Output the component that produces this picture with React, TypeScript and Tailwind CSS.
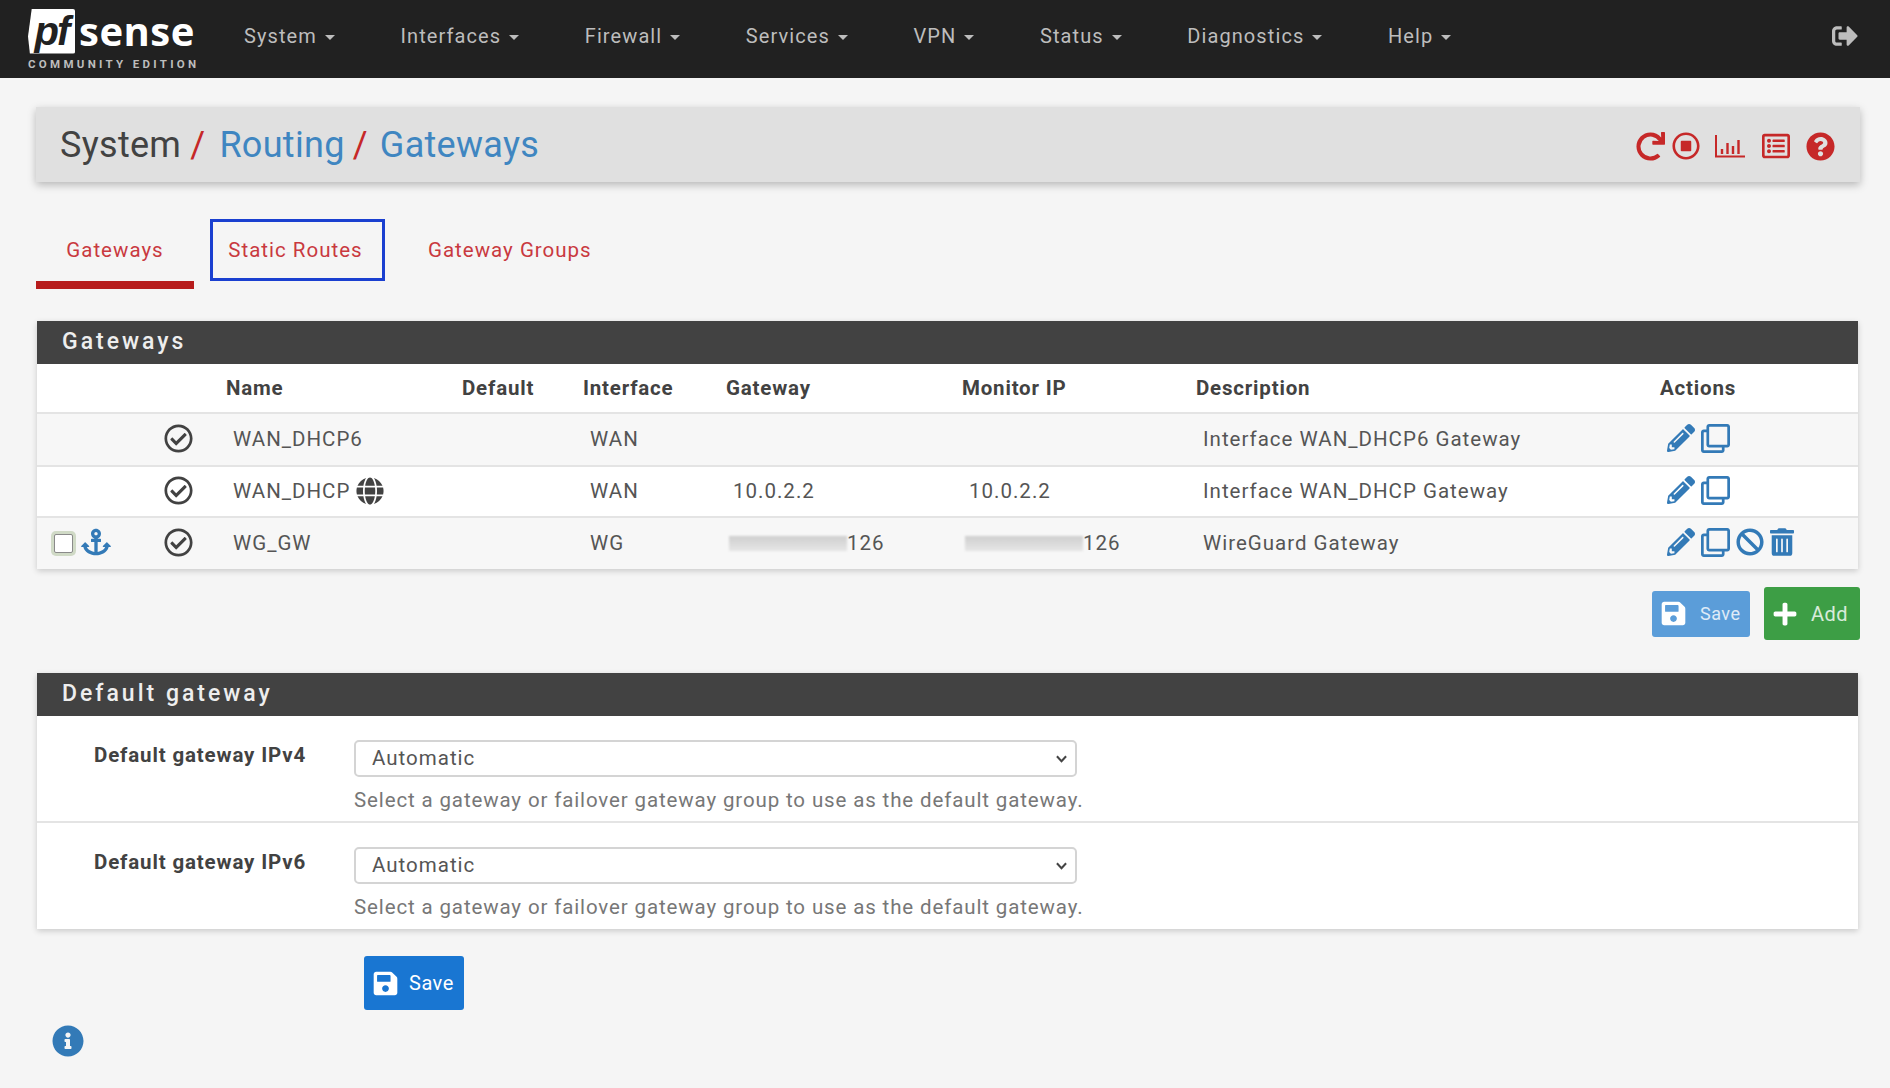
import React from "react";
import {
  FaAnchor, FaBan, FaGlobe, FaInfoCircle, FaPencilAlt, FaPlus, FaQuestionCircle, FaRedo,
  FaRegCheckCircle, FaRegClone, FaRegListAlt, FaRegStopCircle, FaSave, FaSignOutAlt, FaTrashAlt,
} from "react-icons/fa";

const navItems = ["System", "Interfaces", "Firewall", "Services", "VPN", "Status", "Diagnostics", "Help"];

function Logo() {
  return (
    <div className="flex flex-col w-[170px] shrink-0 ml-[28px]">
      <div className="flex items-center h-[46px] mt-[8px]">
        <div className="w-[47px] h-[45px] bg-white rounded-[2px] flex items-center justify-center overflow-hidden [clip-path:polygon(8%_0,100%_0,100%_100%,4%_100%,0_62%)]">
          <span className="text-[#212121] italic font-bold text-[40px] leading-none tracking-[-2px] font-['Liberation_Sans',sans-serif]">pf</span>
        </div>
        <span className="text-white font-bold text-[40px] leading-none ml-[4px] font-['Open_Sans',sans-serif] tracking-[0.5px]">sense</span>
      </div>
      <span className="text-[#bdbdbd] font-bold text-[11.5px] leading-none tracking-[3.3px] mt-[5px] whitespace-nowrap">COMMUNITY EDITION</span>
    </div>
  );
}

function ChartIcon() {
  return (
    <svg viewBox="0 0 30 24" className="w-[30px] h-[24px] ml-[15px]" fill="none" stroke="currentColor">
      <path d="M1 1 V22.5 H30" strokeWidth="2" />
      <path d="M7 20 V15 M12.5 20 V9 M18 20 V12 M23.5 20 V6" strokeWidth="2.4" />
    </svg>
  );
}

function Redacted({ text }: { text: string }) {
  return (
    <span className="inline-flex items-center -ml-[4px]">
      <span className="inline-block w-[118px] h-[15px] bg-gradient-to-b from-[#cfcfcf] to-[#e6e6e6] blur-[1px]" />
      <span>{text}</span>
    </span>
  );
}

const headers = ["Name", "Default", "Interface", "Gateway", "Monitor IP", "Description", "Actions"];

function Actions({ extra }: { extra?: boolean }) {
  return (
    <div className="flex items-center text-[#337ab7] pl-[8px] -mt-[3px]">
      <FaPencilAlt className="w-[28px] h-[28px]" />
      <FaRegClone className="w-[29px] h-[29px] ml-[6px]" />
      {extra && <FaBan className="w-[28px] h-[28px] ml-[6px]" />}
      {extra && <FaTrashAlt className="w-[24px] h-[28px] ml-[6px]" />}
    </div>
  );
}

function Check() {
  return <FaRegCheckCircle className="w-[29px] h-[29px] ml-[9px] -mt-[3px] text-[#424242]" />;
}

function Gateways() {
  const td = "pl-[8px] align-middle";
  return (
    <section className="bg-white shadow-[0_2px_6px_rgba(0,0,0,0.18)] ml-[1px] mr-[2px]">
      <h2 className="h-[43px] bg-[#424242] text-[#eeeeee] text-[23px] font-medium tracking-[3px] pl-[25px] flex items-center">Gateways</h2>
      <table className="w-full table-fixed border-collapse text-[20.5px] tracking-[1px] text-[#555555]">
        <colgroup>
          <col className="w-[118px]" />
          <col className="w-[70px]" />
          <col className="w-[236px]" />
          <col className="w-[121px]" />
          <col className="w-[143px]" />
          <col className="w-[236px]" />
          <col className="w-[234px]" />
          <col className="w-[464px]" />
          <col />
        </colgroup>
        <thead>
          <tr className="h-[49px] border-b-2 border-[#e4e4e4]">
            <th />
            <th />
            {headers.map((h) => (
              <th key={h} className="text-left pl-[1px] font-bold text-[#424242] tracking-[0.8px] pt-[1px]">{h}</th>
            ))}
          </tr>
        </thead>
        <tbody>
          <tr className="h-[53px] bg-[#f7f7f7] border-b-2 border-[#e4e4e4]">
            <td />
            <td><Check /></td>
            <td className={td}>WAN_DHCP6</td>
            <td />
            <td className={td}>WAN</td>
            <td />
            <td />
            <td className={td}>Interface WAN_DHCP6 Gateway</td>
            <td><Actions /></td>
          </tr>
          <tr className="h-[51px] bg-white border-b-2 border-[#e4e4e4]">
            <td />
            <td><Check /></td>
            <td className={td}>
              <span className="inline-flex items-center">WAN_DHCP<FaGlobe className="w-[28px] h-[28px] ml-[6px] -mt-[2px] text-[#424242]" /></span>
            </td>
            <td />
            <td className={td}>WAN</td>
            <td className={td}>10.0.2.2</td>
            <td className={td}>10.0.2.2</td>
            <td className={td}>Interface WAN_DHCP Gateway</td>
            <td><Actions /></td>
          </tr>
          <tr className="h-[52px] bg-[#f7f7f7]">
            <td>
              <div className="flex items-center pl-[17px]">
                <span className="w-[19px] h-[19px] bg-white border border-[#8a8a8a] rounded-[2px] shadow-[0_0_0_3px_rgba(170,190,150,0.5)]" />
                <FaAnchor className="w-[30px] h-[30px] ml-[8px] -mt-[3px] text-[#337ab7]" />
              </div>
            </td>
            <td><Check /></td>
            <td className={td}>WG_GW</td>
            <td />
            <td className={td}>WG</td>
            <td className={td}><Redacted text="126" /></td>
            <td className={td}><Redacted text="126" /></td>
            <td className={td}>WireGuard Gateway</td>
            <td><Actions extra /></td>
          </tr>
        </tbody>
      </table>
    </section>
  );
}

function GatewayField({ label, divided }: { label: string; divided?: boolean }) {
  return (
    <div className={divided ? "flex h-[107px] border-b-2 border-[#e4e4e4]" : "flex h-[106px]"}>
      <label className="w-[317px] pl-[57px] pt-[26px] font-bold text-[#424242] text-[20.5px] tracking-[0.85px] leading-[26px] shrink-0 whitespace-nowrap">{label}</label>
      <div className="pt-[24px]">
        <div className="relative w-[723px]">
          <select className="block w-full h-[37px] appearance-none bg-white border-2 border-[#d4d4d4] rounded-[5px] pl-[16px] pr-[6px] text-[20.5px] tracking-[1px] text-[#555555] outline-none">
            <option>Automatic</option>
          </select>
          <svg viewBox="0 0 12 8" className="absolute right-[10px] top-[15px] w-[11px] h-[8px] text-[#444444] pointer-events-none" fill="none" stroke="currentColor" strokeWidth="2.2">
            <path d="M1 1 L6 6.5 L11 1" />
          </svg>
        </div>
        <p className="mt-[10px] text-[20.5px] tracking-[0.87px] leading-[26px] text-[#777777] whitespace-nowrap">Select a gateway or failover gateway group to use as the default gateway.</p>
      </div>
    </div>
  );
}

export default function App() {
  return (
    <div className="min-h-[1088px] bg-[#f5f5f5] font-['Roboto',sans-serif]">
      <header className="h-[78px] bg-[#212121] flex items-start">
        <Logo />
        <nav className="flex items-center h-[72px] ml-[46px] gap-[65.5px] text-[#bdbdbd] text-[20px] tracking-[1.1px]">
          {navItems.map((n) => (
            <span key={n} className="flex items-center gap-[8px] whitespace-nowrap">
              {n}
              <span className="w-0 h-0 border-x-[5px] border-x-transparent border-t-[5px] border-t-[#bdbdbd] mt-[3px]" />
            </span>
          ))}
        </nav>
        <FaSignOutAlt className="w-[30px] h-[26px] text-[#bdbdbd] ml-auto mt-[23px] mr-[30px]" />
      </header>

      <main className="pl-[36px] pr-[30px]">
        <div className="mt-[29px] h-[75px] bg-[#e0e0e0] shadow-[0_3px_8px_rgba(0,0,0,0.25)] flex items-center pl-[24px] pr-[25px]">
          <div className="flex items-baseline text-[36px] tracking-[0.3px] whitespace-nowrap">
            <span className="text-[#424242]">System</span>
            <span className="text-[#c62828] ml-[9px]">/</span>
            <span className="text-[#3f86c1] ml-[14px]">Routing</span>
            <span className="text-[#c62828] ml-[8px]">/</span>
            <span className="text-[#3f86c1] ml-[12px]">Gateways</span>
          </div>
          <div className="ml-auto flex items-center text-[#c62828] mt-[3px]">
            <FaRedo className="w-[29px] h-[29px]" />
            <FaRegStopCircle className="w-[28px] h-[28px] ml-[7px]" />
            <ChartIcon />
            <FaRegListAlt className="w-[30px] h-[28px] ml-[16px]" />
            <FaQuestionCircle className="w-[29px] h-[29px] ml-[15px]" />
          </div>
        </div>

        <div className="flex items-start mt-[37px] text-[20.5px] tracking-[1px] text-[#c9393f] h-[70px]">
          <div className="w-[158px] h-[70px] border-b-[8px] border-[#b71c1c] flex items-center justify-center">Gateways</div>
          <div className="ml-[16px] w-[175px] h-[62px] border-[3px] border-[#1a3fd0] flex items-center justify-center pr-[4px]">Static Routes</div>
          <div className="ml-[43px] h-[62px] flex items-center">Gateway Groups</div>
        </div>

        <div className="mt-[32px]"><Gateways /></div>

        <div className="flex justify-end items-center gap-[14px] mt-[18px]">
          <button className="w-[98px] h-[46px] bg-[#5b9dd9] rounded-[3px] text-white/80 text-[18px] tracking-[0.5px] flex items-center pl-[8px]">
            <FaSave className="w-[27px] h-[27px] text-white mr-[13px]" />Save
          </button>
          <button className="w-[96px] h-[53px] bg-[#3d9e45] rounded-[3px] text-white/80 text-[20px] tracking-[0.5px] flex items-center pl-[8px]">
            <FaPlus className="w-[26px] h-[26px] text-white mr-[13px]" />Add
          </button>
        </div>

        <section className="mt-[33px] ml-[1px] mr-[2px] bg-white shadow-[0_2px_6px_rgba(0,0,0,0.18)]">
          <h2 className="h-[43px] bg-[#424242] text-[#eeeeee] text-[23px] font-medium tracking-[3px] pl-[25px] flex items-center">Default gateway</h2>
          <GatewayField label="Default gateway IPv4" divided />
          <GatewayField label="Default gateway IPv6" />
        </section>

        <button className="ml-[328px] mt-[27px] w-[100px] h-[54px] bg-[#1976d2] rounded-[3px] text-white text-[20px] tracking-[0.5px] flex items-center pl-[8px]">
          <FaSave className="w-[27px] h-[27px] mr-[10px]" />Save
        </button>

        <FaInfoCircle className="w-[32px] h-[32px] text-[#337ab7] ml-[16px] mt-[15px]" />
      </main>
    </div>
  );
}
